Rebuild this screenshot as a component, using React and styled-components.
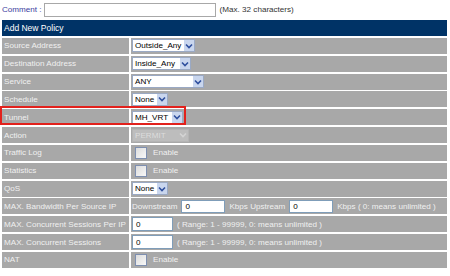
import React from "react";
import styled, { createGlobalStyle } from "styled-components";

const GlobalStyle = createGlobalStyle`
  body {
    margin: 0;
    background: #ffffff;
    font-family: "Liberation Sans", Arial, sans-serif;
    font-size: 8.1px;
  }
`;

const Page = styled.div`
  width: 450px;
  padding: 2px 3px 0 2px;
  box-sizing: border-box;
`;

const CommentRow = styled.div`
  display: flex;
  align-items: center;
  height: 15px;
  gap: 2px;
  white-space: nowrap;
  .label {
    color: #3c3ca0;
    flex-shrink: 0;
  }
  .hint {
    color: #333333;
    margin-left: 2px;
  }
`;

const TextBox = styled.div`
  flex-shrink: 0;
  width: ${(p) => p.w}px;
  height: ${(p) => p.h || 13}px;
  box-sizing: border-box;
  background: #ffffff;
  border: 1px solid ${(p) => p.border || "#7f9db9"};
  color: #000;
  padding: 0 3px;
  display: flex;
  align-items: center;
`;

const Table = styled.div`
  margin-top: 3px;
  display: grid;
  grid-template-columns: 127px 1fr;
  grid-auto-rows: 16px;
  row-gap: 1.85px;
  column-gap: 2px;
  width: 445px;
`;

const Header = styled.div`
  grid-column: 1 / span 2;
  background: #003366;
  color: #ffffff;
  font-size: 8.5px;
  display: flex;
  align-items: center;
  padding-left: 2px;
`;

const Label = styled.div`
  position: relative;
  background: #a8a8a8;
  color: #f0f0f0;
  display: flex;
  align-items: center;
  padding-left: 2px;
  white-space: nowrap;
  ${(p) =>
    p.highlight &&
    `
    &::after {
      content: "";
      position: absolute;
      left: -2px;
      top: -3px;
      width: 186px;
      height: 19px;
      border: 2px solid #e2211c;
      box-sizing: border-box;
      z-index: 2;
    }
  `}
`;

const Value = styled.div`
  background: #a8a8a8;
  color: #f0f0f0;
  display: flex;
  align-items: center;
  padding-left: 1px;
  gap: 4px;
  white-space: nowrap;
`;

const SelectBox = styled.div`
  width: ${(p) => p.w}px;
  height: 13px;
  box-sizing: border-box;
  background: ${(p) => (p.disabled ? "#bdbdbd" : "#ffffff")};
  border: 1px solid ${(p) => (p.disabled ? "#b4b4b4" : "#9aa9c4")};
  color: ${(p) => (p.disabled ? "#dcdcdc" : "#000000")};
  display: flex;
  align-items: center;
  justify-content: space-between;
  padding-left: 2px;
`;

const Arrow = styled.div`
  width: 10px;
  height: 11px;
  background: ${(p) => (p.disabled ? "#bdbdbd" : "#c9d6ee")};
  display: flex;
  align-items: center;
  justify-content: center;
`;

const Check = styled.div`
  width: 10px;
  height: 10px;
  border: 1px solid #7e8fb0;
  background: linear-gradient(135deg, #dcdcdc, #f8f8f8);
  margin: 0 2px 0 3px;
`;

const Select = ({ w, children, disabled }) => (
  <SelectBox w={w} disabled={disabled}>
    <span>{children}</span>
    <Arrow disabled={disabled}>
      <svg width="8" height="6" viewBox="0 0 8 6">
        <path
          d="M1 1.5 L4 4.5 L7 1.5"
          fill="none"
          stroke={disabled ? "#d4d4d4" : "#2f4f9e"}
          strokeWidth="1.6"
        />
      </svg>
    </Arrow>
  </SelectBox>
);

const Enable = () => (
  <Value>
    <Check />
    <span>Enable</span>
  </Value>
);

export default function App() {
  return (
    <Page>
      <GlobalStyle />
      <CommentRow>
        <span className="label">Comment :</span>
        <TextBox w={172} h={14} border="#a8a8a8" />
        <span className="hint">(Max. 32 characters)</span>
      </CommentRow>
      <Table>
        <Header>Add New Policy</Header>

        <Label>Source Address</Label>
        <Value>
          <Select w={63}>Outside_Any</Select>
        </Value>

        <Label>Destination Address</Label>
        <Value>
          <Select w={59}>Inside_Any</Select>
        </Value>

        <Label>Service</Label>
        <Value>
          <Select w={72}>ANY</Select>
        </Value>

        <Label>Schedule</Label>
        <Value>
          <Select w={36}>None</Select>
        </Value>

        <Label highlight>Tunnel</Label>
        <Value>
          <Select w={51}>MH_VRT</Select>
        </Value>

        <Label>Action</Label>
        <Value>
          <Select w={57} disabled>
            PERMIT
          </Select>
        </Value>

        <Label>Traffic Log</Label>
        <Enable />

        <Label>Statistics</Label>
        <Enable />

        <Label>QoS</Label>
        <Value>
          <Select w={36}>None</Select>
        </Value>

        <Label>MAX. Bandwidth Per Source IP</Label>
        <Value>
          <span>Downstream</span>
          <TextBox w={44}>0</TextBox>
          <span>Kbps Upstream</span>
          <TextBox w={44}>0</TextBox>
          <span>Kbps ( 0: means unlimited )</span>
        </Value>

        <Label>MAX. Concurrent Sessions Per IP</Label>
        <Value>
          <TextBox w={41} h={14}>0</TextBox>
          <span>( Range: 1 - 99999, 0: means unlimited )</span>
        </Value>

        <Label>MAX. Concurrent Sessions</Label>
        <Value>
          <TextBox w={41} h={14}>0</TextBox>
          <span>( Range: 1 - 99999, 0: means unlimited )</span>
        </Value>

        <Label>NAT</Label>
        <Enable />
      </Table>
    </Page>
  );
}
